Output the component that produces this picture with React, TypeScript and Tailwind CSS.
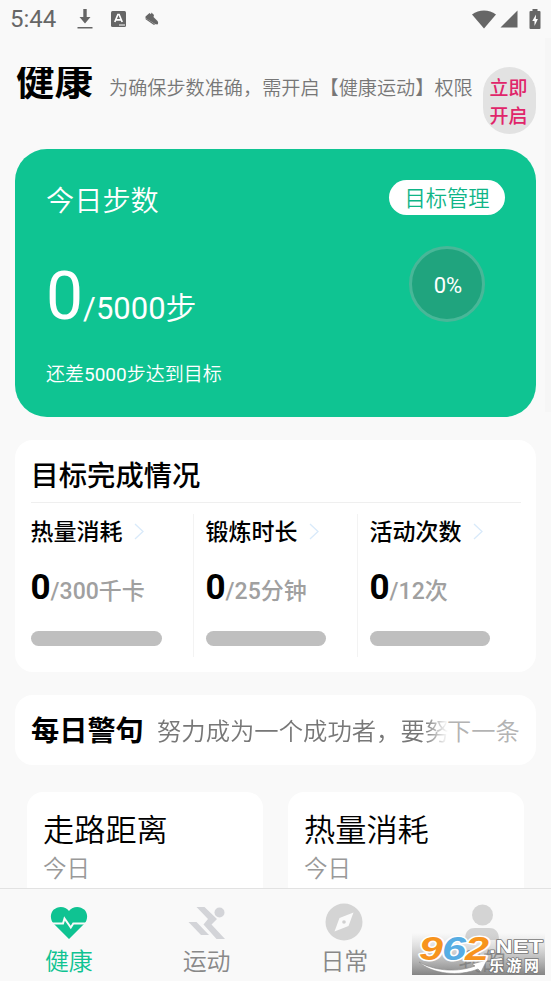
import { ReactNode } from "react";

interface IGoal {
  id: string;
  label: string;
  value: number;
  target: string;
  className: string;
  barWidth: string;
}

interface ITab {
  id: string;
  label: string;
  icon: ReactNode;
  active?: boolean;
}

/*~~~~~~~~$ icons $~~~~~~~~*/
const HeartIcon = () => (
  <svg width="38" height="34" viewBox="0 0 38 34" className="mt-px">
    <path
      d="M19 5C22.500 0 30 -.5 34.500 3.800C38 7.500 38 13.500 34.500 17.500L19 33L3.500 17.500C0 13.500 0 7.500 3.500 3.800C8-.5 15.500 0 19 5Z"
      fill="#0fc392"
    />
    <path
      d="M0 17.500H13L14.500 12.500L20.800 21.500L23.300 17.500H38"
      fill="none"
      stroke="#f9f9f9"
      strokeWidth="2"
    />
  </svg>
);

const RunIcon = () => (
  <svg width="38" height="34" viewBox="0 0 38 34" className="mt-px" fill="#d3d4d8">
    <circle cx="31.500" cy="6.500" r="5" />
    <path d="M8.500 1H16.500L29 13L23.500 18.500L37 33H28.500L15.500 18.500L20 13Z" />
    <path d="M.5 16H8.500L21 29H13Z" />
  </svg>
);

const CompassIcon = () => (
  <svg width="38" height="38" viewBox="0 0 38 38">
    <circle cx="19" cy="19" r="18.500" fill="#d4d4d4" />
    <path d="M28.500 9.500L23.500 23L9.500 28.500L14.500 15Z" fill="#fafafa" />
    <circle cx="19" cy="19" r="1.800" fill="#d0d0d0" />
  </svg>
);

const PersonIcon = () => (
  <svg width="38" height="38" viewBox="0 0 38 38" fill="#d4d4d4">
    <circle cx="19.500" cy="12" r="10.500" />
    <path d="M2 37C2 28 6 25 12 25H26C32 25 36 28 36 37Z" />
  </svg>
);

const Chevron = () => (
  <svg width="10" height="17" viewBox="0 0 10 17" className="ml-[11px]">
    <path d="M1 1L9 8.500L1 16" fill="none" stroke="#d9eafa" strokeWidth="1.300" />
  </svg>
);

/*~~~~~~~~$ data $~~~~~~~~*/
const goals: IGoal[] = [
  { id: "heat", label: "热量消耗", value: 0, target: "/300千卡", className: "w-[162px]", barWidth: "w-[131px]" },
  { id: "time", label: "锻炼时长", value: 0, target: "/25分钟", className: "w-[164px] border-l border-[#f3f3f3] pl-3", barWidth: "w-[120px]" },
  { id: "count", label: "活动次数", value: 0, target: "/12次", className: "flex-1 border-l border-[#f3f3f3] pl-3", barWidth: "w-[120px]" },
];

const cards = ["走路距离", "热量消耗"];

const tabs: ITab[] = [
  { id: "health", label: "健康", icon: <HeartIcon />, active: true },
  { id: "sport", label: "运动", icon: <RunIcon /> },
  { id: "daily", label: "日常", icon: <CompassIcon /> },
  { id: "mine", label: "我的", icon: <PersonIcon /> },
];

const StatusBar = () => (
  <div className="flex h-[38px] shrink-0 items-center pl-[10px] text-[#666]">
    <span className="w-[67px] text-[24px] leading-[38px] font-[450]">5:44</span>
    <svg width="16" height="22" viewBox="0 0 16 22" fill="#666">
      <path d="M6.300 1H9.700V9H13.500L8 15.500L2.500 9H6.300ZM0.500 19H15.500V20.500H0.500Z" />
    </svg>
    <svg width="15" height="16" viewBox="0 0 15 16" className="ml-[18px]">
      <rect x="0" y="0" width="15" height="16" rx="1.500" fill="#666" />
      <path d="M3.800 11L6.900 3.500H8.100L11.200 11M5 8.800H10" fill="none" stroke="#fff" strokeWidth="1.700" />
      <path d="M8 14H14" stroke="#fff" strokeWidth="1" />
    </svg>
    <svg width="14" height="14" viewBox="0 0 14 14" className="ml-[19px]" fill="#666">
      <path d="M.5 4.500L4.500 1L6 2.200L6.500 .5L9 3L8.500 5L12.500 9C13.500 10.200 13.300 12 12.300 12.500L10 12L.5 6Z" />
      <path d="M.6 6L10.500 12.500L8.500 12.800L.6 7.300Z" />
    </svg>
    <div className="ml-auto flex items-center pr-[10px]">
      <svg width="24" height="19" viewBox="0 0 24 19" fill="#666">
        <path d="M0 4.500C7-1 17-1 24 4.500L12 18.500Z" />
      </svg>
      <svg width="18" height="18" viewBox="0 0 18 18" className="ml-1" fill="#666">
        <path d="M17.500 0.500V17.500H0.500Z" />
      </svg>
      <svg width="12" height="20" viewBox="0 0 12 20" className="ml-[11px]">
        <path d="M3.500 0H8.500V2H10.500Q11.500 2 11.500 3V19Q11.500 20 10.500 20H1.500Q.5 20 .5 19V3Q.5 2 1.500 2H3.500Z" fill="#666" />
        <path d="M7 5.500L3.300 12H5.500V17L8.900 10H6.800Z" fill="#fff" />
      </svg>
    </div>
  </div>
);

const Watermark = () => (
  <svg
    width="133"
    height="48"
    viewBox="0 0 133 48"
    className="absolute right-[6px] bottom-[6px]"
  >
    <defs>
      <linearGradient id="shade" x1="0" y1="0" x2="0" y2="1">
        <stop offset="0" stopColor="#aaa" stopOpacity="0" />
        <stop offset="1" stopColor="#777" stopOpacity="0.9" />
      </linearGradient>
    </defs>
    <rect x="0" y="6" width="133" height="42" fill="url(#shade)" />
    <path d="M7 35C25 45 47 45 63 39L60 37L75 33L69 45L66 42C47 50 20 47 7 35Z" fill="#fff" stroke="#888" strokeWidth=".6" />
    <g
      fontFamily="'Liberation Sans', sans-serif"
      fontWeight="700"
      stroke="#fff"
      strokeWidth="3"
      paintOrder="stroke"
      strokeLinejoin="round"
    >
      <g fontStyle="italic" fontSize="34">
        <text x="7" y="33" textLength="24" lengthAdjust="spacingAndGlyphs" fill="#f7941d">9</text>
        <text x="30" y="33" textLength="24" lengthAdjust="spacingAndGlyphs" fill="#57ade3">6</text>
        <text x="53" y="33" textLength="24" lengthAdjust="spacingAndGlyphs" fill="#f7941d">2</text>
      </g>
      <text x="77" y="26" fontSize="18" textLength="54" lengthAdjust="spacingAndGlyphs" fill="#fff" stroke="#777" strokeWidth="1.500">
        .NET
      </text>
    </g>
    <text
      x="77"
      y="43.500"
      fontSize="15"
      textLength="50"
      fontWeight="700"
      fontFamily="'Noto Sans CJK SC', sans-serif"
      fill="#fff"
      stroke="#777"
      strokeWidth="1.500"
      paintOrder="stroke"
    >
      乐游网
    </text>
  </svg>
);

function App() {
  /*~~~~~~~~$ all renders $~~~~~~~~*/
  const renderGoals = goals.map((goal) => (
    <div key={goal.id} className={goal.className}>
      <div className="flex h-[34px] items-center">
        <span className="pt-[3px] text-[23px] leading-[34px] font-medium">{goal.label}</span>
        <Chevron />
      </div>
      <p className="mt-[20px] h-[40px] text-[23px] leading-[40px] font-medium whitespace-nowrap text-[#a0a0a0]">
        <span className="text-[35px] font-bold text-black">{goal.value}</span>
        {goal.target}
      </p>
      <div className={`mt-[23px] h-[15px] rounded-full bg-[#bfbfbf] ${goal.barWidth}`} />
    </div>
  ));

  const renderCards = cards.map((title) => (
    <div key={title} className="h-[140px] w-[236px] rounded-[16px] bg-white px-4 pt-[17px]">
      <h3 className="text-[31.200px] leading-[44px] font-[350]">{title}</h3>
      <p className="text-[23.500px] leading-[32px] font-[350] text-[#999]">今日</p>
    </div>
  ));

  const renderTabs = tabs.map((tab) => (
    <div key={tab.id} className="flex flex-1 flex-col items-center pt-[14px]">
      <div className="flex h-[38px] items-center">{tab.icon}</div>
      <span
        className={`mt-[2px] text-[24px] leading-[38px] font-[350] ${tab.active ? "text-[#0fc392]" : "text-[#888]"}`}
      >
        {tab.label}
      </span>
    </div>
  ));

  return (
    <div className="relative flex h-[981px] w-[551px] flex-col overflow-hidden bg-[#f9f9f9] font-['Roboto','Noto_Sans_CJK_SC',sans-serif] text-black">
      <StatusBar />

      <main className="min-h-0 flex-1 overflow-hidden px-[15px]">
        <header className="flex h-[111px] items-start pt-[29px]">
          <h1 className="ml-[1px] h-[36px] w-[93px] overflow-hidden text-[38.500px] leading-[29px] font-bold whitespace-nowrap">健康</h1>
          <p className="w-[374px] pt-[7px] text-[19.150px] leading-[30px] font-[350] whitespace-nowrap text-[#777]">
            为确保步数准确，需开启【健康运动】权限
          </p>
          <button className="h-[67px] w-[53px] shrink-0 rounded-full bg-[#e2e2e2] pt-[4px] pr-[8px] pl-[6px] text-[19px] leading-[28px] font-medium text-[#e0256a]">
            立即开启
          </button>
        </header>

        {/*~~~~~~~~$ steps of today $~~~~~~~~*/}
        <section className="flex h-[268px] justify-between rounded-[32px] bg-[#0fc492] pr-[31px] pl-[31px] text-white">
          <div className="pt-[33px]">
            <h2 className="text-[28.200px] leading-[40px] font-[350]">今日步数</h2>
            <p className="mt-[35px] h-[80px] text-[31px] leading-[80px] whitespace-nowrap">
              <span className="text-[66px]">0</span>/5000<span className="font-[350]">步</span>
            </p>
            <p className="mt-[24px] text-[19px] leading-[28px] font-[350]">
              还差<span className="font-normal">5000</span>步达到目标
            </p>
          </div>
          <div className="flex flex-col items-center pt-[31px]">
            <button className="h-[35px] w-[116px] rounded-full bg-white text-[21.300px] leading-[37px] font-[350] text-[#0fb587]">
              目标管理
            </button>
            <div className="mt-[31px] flex size-[76px] items-center justify-center rounded-full border-[3px] border-[#48b798] bg-[#20a47e] pt-[2px] pl-[2px] text-[22px]">
              0%
            </div>
          </div>
        </section>

        {/*~~~~~~~~$ goals $~~~~~~~~*/}
        <section className="mt-[23px] h-[232px] rounded-[18px] bg-white px-[15.500px] pt-[14px]">
          <h2 className="h-[48px] text-[28.300px] leading-[45px] font-medium">目标完成情况</h2>
          <div className="h-px bg-[#efefef]" />
          <div className="mt-[11px] flex h-[143px]">{renderGoals}</div>
        </section>

        {/*~~~~~~~~$ daily quote $~~~~~~~~*/}
        <section className="mt-[23px] flex h-[70px] items-center rounded-[18px] bg-white pt-[3px] pl-[16px]">
          <h2 className="w-[119px] shrink-0 text-[28.200px] leading-[44px] font-bold">每日警句</h2>
          <p className="w-[298px] shrink-0 overflow-hidden mask-r-from-92% pl-[7px] text-[24.350px] leading-[40px] font-[350] whitespace-nowrap text-[#777]">
            努力成为一个成功者，要努
          </p>
          <span className="-ml-px text-[24.200px] leading-[40px] font-[350] whitespace-nowrap text-[#b3b3b3]">下一条</span>
        </section>

        <section className="mt-[27px] flex gap-[25px] pl-[12px]">{renderCards}</section>
      </main>

      <nav className="flex h-[93px] shrink-0 border-t border-[#e2e2e2] bg-[#f9f9f9]">{renderTabs}</nav>
      <div className="absolute top-[38px] right-0 h-[374px] w-[6px] bg-[#f6f6f6]" />
      <Watermark />
    </div>
  );
}

export default App;
